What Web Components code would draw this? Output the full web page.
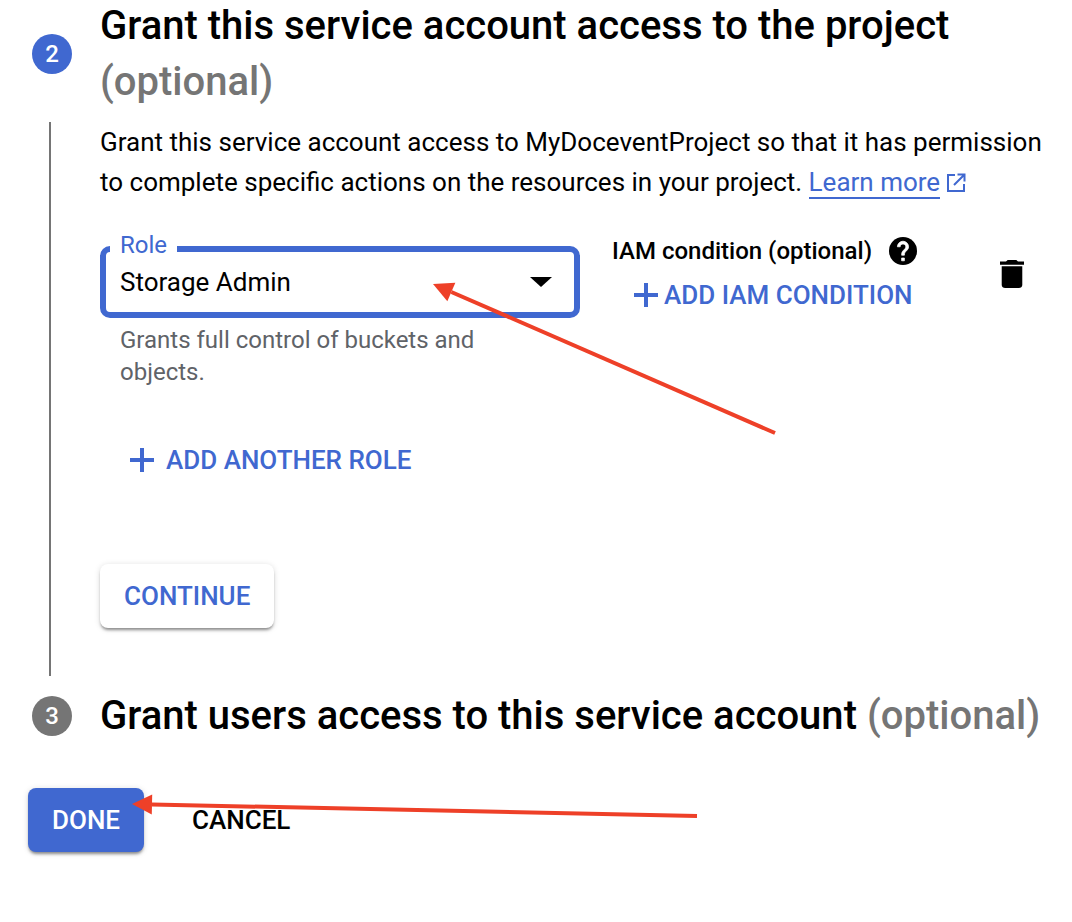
<!DOCTYPE html>
<html>
<head>
<meta charset="utf-8">
<title>Grant access</title>
<style>
  html, body { margin: 0; background: #fff; }
  body { font-family: Roboto, "Liberation Sans", sans-serif; color: #000; height: 922px; overflow: hidden; position: relative; }
  .page { margin-top: -2px; }
  .actions { display: flex; gap: 24px; margin: 44px 0 0 28px; }
  .opt { color: #757575; }
</style>
</head>
<body>
<div class="page">
  <step-block number="2" active>
    <span slot="title">Grant this service account access to the project <span class="opt">(optional)</span></span>
    <role-panel>
      <span slot="intro">Grant this service account access to MyDoceventProject so that it has permission to complete specific actions on the resources in your project.</span>
    </role-panel>
  </step-block>
  <step-block number="3">
    <span slot="title">Grant users access to this service account <span class="opt">(optional)</span></span>
  </step-block>
  <div class="actions">
    <raised-button primary>DONE</raised-button>
    <flat-button>CANCEL</flat-button>
  </div>
</div>
<red-arrow x1="775" y1="433" x2="433" y2="284"></red-arrow>
<red-arrow x1="697" y1="816" x2="132" y2="804"></red-arrow>

<script>
class StepBlock extends HTMLElement {
  constructor(){
    super();
    this._shadowRoot = this.attachShadow({mode: "open"});
  }
  connectedCallback(){
    const n = this.getAttribute("number");
    const active = this.hasAttribute("active");
    this._shadowRoot.innerHTML = `
      <style>
        :host { display: block; }
        .head { display: flex; align-items: center; margin-top: 12px; }
        :host([active]) .head { margin-top: 0; }
        .num {
          flex: none; width: 40px; height: 40px; border-radius: 50%;
          margin-left: 32px; margin-right: 28px;
          background: ${active ? "#4068d0" : "#757575"};
          color: #fff; font-size: 24px; font-weight: 500;
          display: flex; align-items: center; justify-content: center;
        }
        .title { font-size: 40px; font-weight: 500; line-height: 56px; max-width: 950px; }
        .body { margin: 12px 0 0 49px; border-left: 2px solid #757575; padding: 0 0 48px 49px; }
        .body.empty { display: none; }
      </style>
      <div class="head">
        <div class="num">${n}</div>
        <div class="title"><slot name="title"></slot></div>
      </div>
      <div class="body ${active ? "" : "empty"}"><slot></slot></div>
    `;
  }
}
customElements.define("step-block", StepBlock);

class RolePanel extends HTMLElement {
  constructor(){
    super();
    this._shadowRoot = this.attachShadow({mode: "open"});
  }
  connectedCallback(){
    this._shadowRoot.innerHTML = `
      <style>
        :host { display: block; font-size: 26px; }
        .intro { line-height: 40px; width: 945px; }
        .intro a { color: #4068d0; text-decoration: none; display: inline-block; line-height: 30px; border-bottom: 2px solid #4068d0; }
        .intro svg { vertical-align: -2px; margin-left: 6px; }
        .row { display: flex; margin-top: 44px; }
        .left { width: 480px; flex: none; margin-right: 32px; }
        .iam { width: 388px; flex: none; }
        .iam-head { display: flex; align-items: center; font-size: 24px; font-weight: 500; height: 28px; margin-top: -9px; }
        .iam-head svg { margin-left: 17px; }
        .iam-body { margin-left: 22px; margin-top: 10px; }
        .trash { flex: none; margin-top: 14px; }
        .help { color: #5f6368; font-size: 24px; line-height: 32px; margin: 6px 0 0 20px; width: 380px; }
        .add { margin: 52px 0 0 30px; }
        .next { margin-top: 84px; }
      </style>
      <div class="intro"><slot name="intro"></slot> <a>Learn more</a><svg width="20" height="20" viewBox="0 0 20 20" fill="none" stroke="#4068d0" stroke-width="2"><path d="M9 2H2v16h16v-7M11.500 1.500h7v7M18.500 1.500L8 12"/></svg></div>
      <div class="row">
        <div class="left">
          <role-select label="Role" value="Storage Admin"></role-select>
          <div class="help">Grants full control of buckets and objects.</div>
        </div>
        <div class="iam">
          <div class="iam-head">IAM condition (optional)
            <svg width="28" height="28" viewBox="2 2 20 20"><circle cx="12" cy="12" r="10" fill="#000"/><path d="M13 19h-2v-2h2v2zm2.070-7.750l-.9.920C13.450 12.900 13 13.500 13 15h-2v-.5c0-1.100.45-2.100 1.170-2.830l1.240-1.260c.37-.36.59-.86.59-1.410 0-1.100-.9-2-2-2s-2 .9-2 2H8c0-2.210 1.790-4 4-4s4 1.790 4 4c0 .88-.36 1.680-.93 2.250z" fill="#fff" stroke="#fff" stroke-width=".5"/></svg>
          </div>
          <div class="iam-body"><flat-button icon>ADD IAM CONDITION</flat-button></div>
        </div>
        <svg class="trash" width="24" height="28" viewBox="5 3 14 18" preserveAspectRatio="none"><path d="M6 19c0 1.100.9 2 2 2h8c1.100 0 2-.9 2-2V7H6v12zM19 4h-3.500l-1-1h-5l-1 1H5v2h14V4z" fill="#000"/></svg>
      </div>
      <div class="add"><flat-button icon wide>ADD ANOTHER ROLE</flat-button></div>
      <div class="next"><raised-button>CONTINUE</raised-button></div>
    `;
  }
}
customElements.define("role-panel", RolePanel);

class RoleSelect extends HTMLElement {
  constructor(){
    super();
    this._shadowRoot = this.attachShadow({mode: "open"});
  }
  connectedCallback(){
    this._shadowRoot.innerHTML = `
      <style>
        :host { display: block; position: relative; }
        .box {
          box-sizing: border-box; height: 72px; border: 6px solid #4068d0; border-radius: 10px;
          display: flex; align-items: center; justify-content: space-between;
          padding: 0 22px 0 14px; font-size: 26px;
        }
        .label {
          position: absolute; left: 10px; top: -13px; padding: 0 10px 0 10px;
          background: #fff; color: #4068d0; font-size: 24px; line-height: 24px;
        }
        .tri { width: 0; height: 0; border-left: 11px solid transparent; border-right: 11px solid transparent; border-top: 10px solid #000; }
      </style>
      <div class="label">${this.getAttribute("label")}</div>
      <div class="box"><span>${this.getAttribute("value")}</span><div class="tri"></div></div>
    `;
  }
}
customElements.define("role-select", RoleSelect);

class FlatButton extends HTMLElement {
  constructor(){
    super();
    this._shadowRoot = this.attachShadow({mode: "open"});
  }
  connectedCallback(){
    const icon = this.hasAttribute("icon");
    const gap = this.hasAttribute("wide") ? 12 : 6;
    this._shadowRoot.innerHTML = `
      <style>
        :host { display: inline-flex; align-items: center; font-size: 26px; font-weight: 500; height: ${icon ? 40 : 64}px;
          color: ${icon ? "#4068d0" : "#000"}; padding: 0 ${icon ? 0 : 24}px; }
        svg { margin-right: ${gap}px; }
      </style>
      ${icon ? '<svg width="24" height="24" viewBox="0 0 24 24"><path d="M10 0h4v10h10v4H14v10h-4V14H0v-4h10z" fill="#4068d0"/></svg>' : ""}
      <slot></slot>
    `;
  }
}
customElements.define("flat-button", FlatButton);

class RaisedButton extends HTMLElement {
  constructor(){
    super();
    this._shadowRoot = this.attachShadow({mode: "open"});
  }
  connectedCallback(){
    const primary = this.hasAttribute("primary");
    this._shadowRoot.innerHTML = `
      <style>
        :host {
          display: inline-flex; align-items: center; height: 64px; padding: 0 24px; border-radius: 8px;
          font-size: 26px; font-weight: 500;
          background: ${primary ? "#4068d0" : "#fff"};
          color: ${primary ? "#fff" : "#4068d0"};
          box-shadow: 0 3px 3px -1px rgba(0,0,0,.4), 0 1px 6px rgba(0,0,0,.14);
        }
      </style>
      <slot></slot>
    `;
  }
}
customElements.define("raised-button", RaisedButton);

// annotation drawn over the screenshot, place is the content here
class RedArrow extends HTMLElement {
  constructor(){
    super();
    this._shadowRoot = this.attachShadow({mode: "open"});
  }
  connectedCallback(){
    const x1 = +this.getAttribute("x1"), y1 = +this.getAttribute("y1");
    const x2 = +this.getAttribute("x2"), y2 = +this.getAttribute("y2");
    const a = Math.atan2(y1 - y2, x1 - x2);
    const len = 20, half = 10;
    const bx = x2 + Math.cos(a) * len, by = y2 + Math.sin(a) * len;
    const px = -Math.sin(a) * half, py = Math.cos(a) * half;
    this._shadowRoot.innerHTML = `
      <style>
        :host { position: absolute; left: 0; top: 0; display: block; pointer-events: none; }
        svg { display: block; }
      </style>
      <svg width="1072" height="922">
        <line x1="${x1}" y1="${y1}" x2="${bx}" y2="${by}" stroke="#ee4028" stroke-width="4"/>
        <polygon points="${x2},${y2} ${bx + px},${by + py} ${bx - px},${by - py}" fill="#ee4028"/>
      </svg>
    `;
  }
}
customElements.define("red-arrow", RedArrow);
</script>
</body>
</html>
